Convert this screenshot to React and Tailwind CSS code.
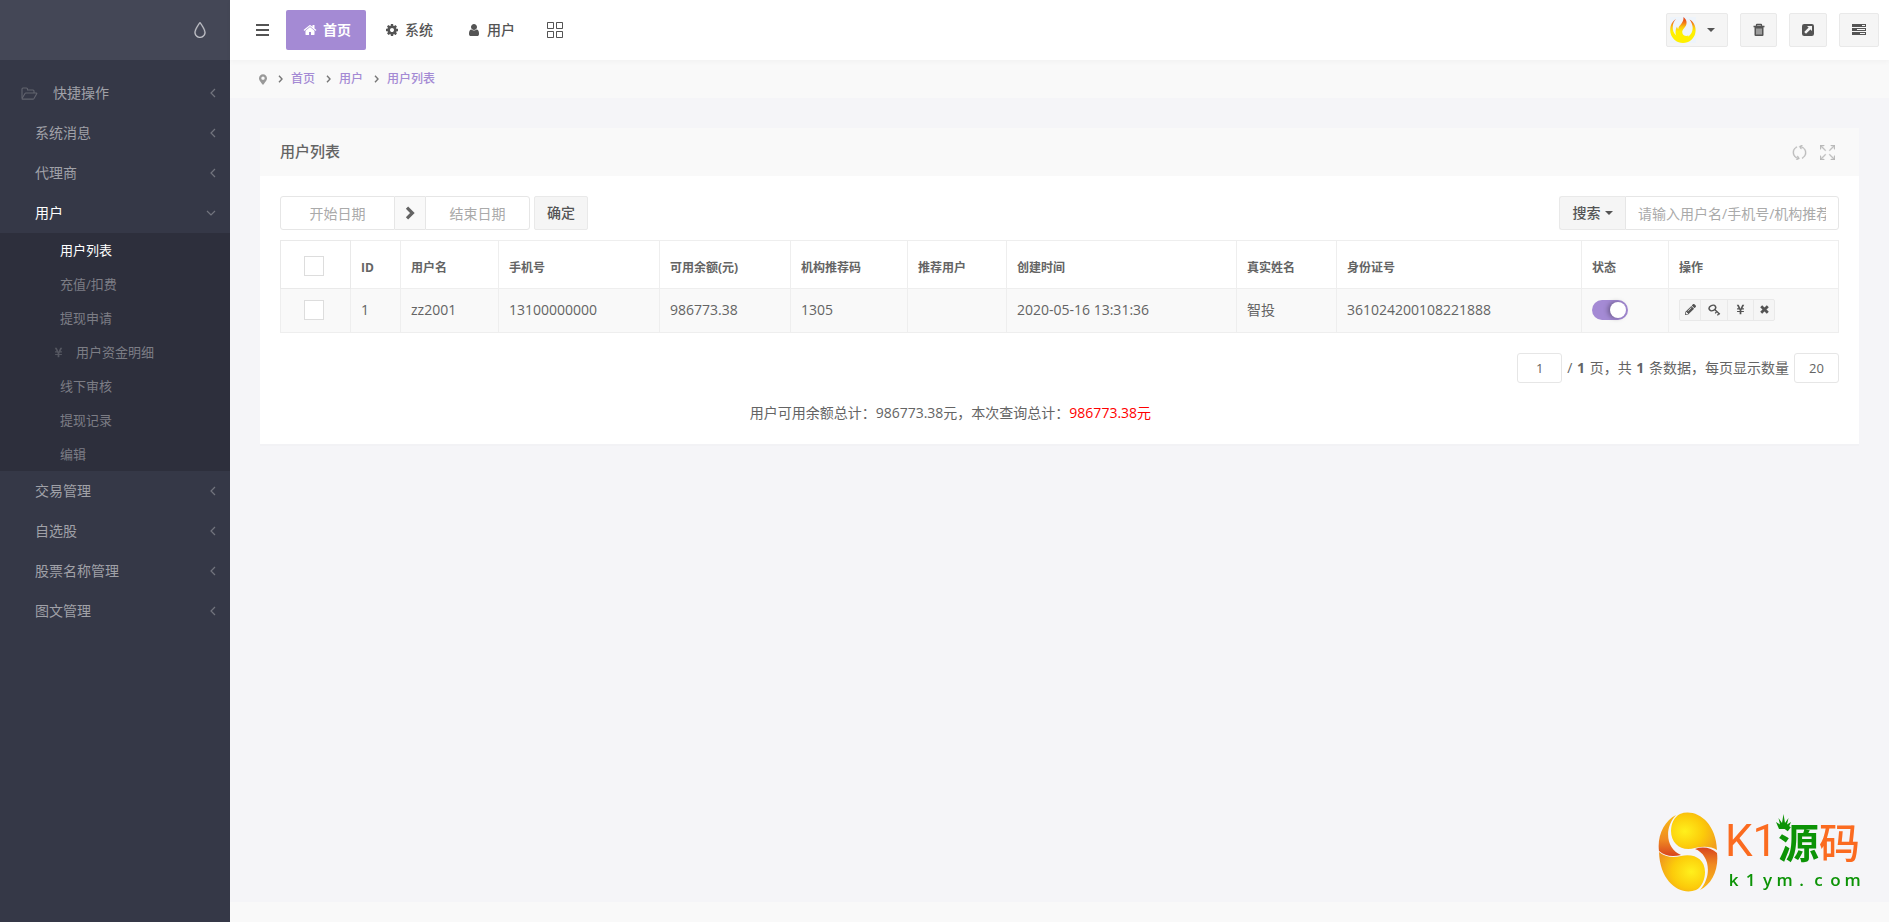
import { FaMapMarkerAlt, FaPencilAlt, FaYenSign } from "react-icons/fa";
import { SlDrop, SlGrid, SlRefresh, SlSizeFullscreen } from "react-icons/sl";

const menuTop = [
  { label: "快捷操作", icon: true },
  { label: "系统消息" },
  { label: "代理商" },
  { label: "用户", open: true },
];

const subMenu = [
  { label: "用户列表", active: true },
  { label: "充值/扣费" },
  { label: "提现申请" },
  { label: "用户资金明细", icon: true },
  { label: "线下审核" },
  { label: "提现记录" },
  { label: "编辑" },
];

const menuBottom = ["交易管理", "自选股", "股票名称管理", "图文管理"];

const columns = [
  { title: "ID", width: "w-[50px]" },
  { title: "用户名", width: "w-[98px]" },
  { title: "手机号", width: "w-[161px]" },
  { title: "可用余额(元)", width: "w-[131px]" },
  { title: "机构推荐码", width: "w-[117px]" },
  { title: "推荐用户", width: "w-[99px]" },
  { title: "创建时间", width: "w-[230px]" },
  { title: "真实姓名", width: "w-[100px]" },
  { title: "身份证号", width: "w-[245px]" },
  { title: "状态", width: "w-[87px]" },
  { title: "操作", width: "" },
];

const rows = [
  ["1", "zz2001", "13100000000", "986773.38", "1305", "", "2020-05-16 13:31:36", "智投", "361024200108221888"],
];

function Glyph({ d, className }) {
  return (
    <svg viewBox="0 0 1792 1792" fill="currentColor" className={className} aria-hidden="true">
      <path d={d} />
    </svg>
  );
}

const homePath =
  "M1472 992v480q0 26-19 45t-45 19h-384v-384h-256v384h-384q-26 0-45-19t-19-45v-480q0-1 .5-3t.5-3l575-474 575 474q1 2 1 6zm223-69l-62 74q-8 9-21 11h-3q-13 0-21-7l-692-577-692 577q-12 8-24 7-13-2-21-11l-62-74q-8-10-7-23.5t11-21.5l719-599q32-26 76-26t76 26l244 204v-195q0-14 9-23t23-9h192q14 0 23 9t9 23v408l219 182q10 8 11 21.5t-7 23.5z";
const cogPath =
  "M1152 896q0-106-75-181t-181-75-181 75-75 181 75 181 181 75 181-75 75-181zm512-109v222q0 12-8 23t-20 13l-185 28q-19 54-39 91 35 50 107 138 10 12 10 25t-9 23q-27 37-99 108t-94 71q-12 0-26-9l-138-108q-44 23-91 38-16 136-29 186-7 28-36 28h-222q-14 0-24.5-8.5t-11.5-21.5l-28-184q-49-16-90-37l-141 107q-10 9-25 9-14 0-25-11-126-114-165-168-7-10-7-23 0-12 8-23 15-21 51-66.5t54-70.5q-27-50-41-99l-183-27q-13-2-21-12.5t-8-23.5v-222q0-12 8-23t19-13l186-28q14-46 39-92-40-57-107-138-10-12-10-24 0-10 9-23 26-36 98.5-107.5t94.5-71.5q13 0 26 10l138 107q44-23 91-38 16-136 29-186 7-28 36-28h222q14 0 24.5 8.5t11.5 21.5l28 184q49 16 90 37l142-107q9-9 24-9 13 0 25 10 129 119 165 170 7 8 7 22 0 12-8 23-15 21-51 66.5t-54 70.5q26 50 41 98l183 28q13 2 21 12.5t8 23.5z";
const userPath =
  "M1536 1399q0 109-62.5 187t-150.5 78h-854q-88 0-150.5-78t-62.5-187q0-85 8.5-160.5t31.5-152 58.5-131 94-89 134.5-34.5q131 128 313 128t313-128q76 0 134.5 34.5t94 89 58.5 131 31.5 152 8.5 160.5zm-256-887q0 159-112.5 271.5t-271.5 112.5-271.5-112.5-112.5-271.5 112.5-271.5 271.5-112.5 271.5 112.5 112.5 271.5z";

const strokeProps = { fill: "none", stroke: "currentColor", "aria-hidden": true };

function AngleLeft() {
  return (
    <svg viewBox="0 0 6 10" className="h-[10px] w-[6px] text-[#72747e]" strokeWidth="1.2" {...strokeProps}>
      <path d="M5 1L1 5l4 4" />
    </svg>
  );
}

function AngleDown() {
  return (
    <svg viewBox="0 0 10 6" className="h-[6px] w-[10px] text-[#72747e]" strokeWidth="1.2" {...strokeProps}>
      <path d="M1 1l4 4 4-4" />
    </svg>
  );
}

function AngleRight() {
  return (
    <svg viewBox="0 0 5 8" className="h-2 w-[5px] text-[#777]" strokeWidth="1.4" {...strokeProps}>
      <path d="M1 .8L4 4 1 7.2" />
    </svg>
  );
}

function ChevronRight() {
  return (
    <svg viewBox="0 0 10 14" className="h-[14px] w-[10px]" strokeWidth="3.2" {...strokeProps}>
      <path d="M2 1.6L7.4 7 2 12.4" />
    </svg>
  );
}

function Caret() {
  return (
    <svg viewBox="0 0 8 4" className="h-1 w-2" fill="currentColor" aria-hidden="true">
      <path d="M0 0h8L4 4z" />
    </svg>
  );
}

function FolderOpenIcon() {
  return (
    <svg viewBox="0 0 17 13" className="h-[13px] w-[17px] text-[#62646f]" strokeWidth="1.1" strokeLinejoin="round" {...strokeProps}>
      <path d="M1 11V2q0-1 1-1h3.5q1 0 1 1v1H12q1 0 1 1v2" />
      <path d="M4.800 6h10.500q.9 0 .4.800L13 11.500q-.4.600-1.200.600H1.500q-.8 0-.3-.8L4 6.500q.3-.5.800-.5z" />
    </svg>
  );
}

function KeyIcon() {
  return (
    <svg viewBox="0 0 13 12" className="h-3 w-[13px]" {...strokeProps}>
      <ellipse cx="4.400" cy="4" rx="3.400" ry="2.600" strokeWidth="1.500" transform="rotate(-25 4.400 4)" />
      <path d="M6.400 5.200l5.400 5" strokeWidth="1.400" />
      <path d="M7.200 9.300l1.700-2M9.400 11.400l1.700-2" strokeWidth="1.300" />
    </svg>
  );
}

function TimesIcon() {
  return (
    <svg viewBox="0 0 9 9" className="size-[9px]" strokeWidth="2.8" {...strokeProps}>
      <path d="M1.200 1.200l6.600 6.600M7.800 1.200L1.200 7.800" />
    </svg>
  );
}

function PencilIcon() {
  return <FaPencilAlt className="size-[11px]" />;
}

function YenIcon() {
  return <FaYenSign className="size-[11px]" />;
}

function TrashIcon() {
  return (
    <svg viewBox="0 0 14 14" className="size-[14px]" fill="none" stroke="currentColor" aria-hidden="true">
      <path d="M1.500 3.500h11M4.500 3.500V2q0-.5.5-.5h4q.5 0 .5.500v1.500" strokeWidth="1.3" />
      <path d="M2.500 4h9v8q0 1-1 1h-7q-1 0-1-1z" fill="currentColor" stroke="none" />
      <path d="M5 5.500v6M7 5.500v6M9 5.500v6" stroke="#f5f5f5" strokeWidth=".9" />
    </svg>
  );
}

function ExternalIcon() {
  return (
    <svg viewBox="0 0 12 12" className="size-3" aria-hidden="true">
      <rect width="12" height="12" rx="2.2" fill="currentColor" />
      <path d="M5 2h5v5L8.400 5.400 4 9.800 2.200 8 6.600 3.600z" fill="#f5f5f5" />
    </svg>
  );
}

function TasksIcon() {
  return (
    <svg viewBox="0 0 14 12" className="h-3 w-[14px]" aria-hidden="true">
      <path d="M0 0h14v3H0zM0 4h14v3H0zM0 8h14v3H0z" fill="currentColor" />
      <path d="M10 1h3v1h-3zM5 5h8v1H5zM8 9h5v1H8z" fill="#f5f5f5" />
    </svg>
  );
}

function FlameAvatar() {
  return (
    <svg viewBox="0 0 26 26" className="size-[26px]" aria-hidden="true">
      <defs>
        <linearGradient id="flame" gradientUnits="userSpaceOnUse" x1="0" y1="0" x2="0" y2="26">
          <stop offset="0" stopColor="#e23a16" />
          <stop offset=".2" stopColor="#f0701a" />
          <stop offset=".38" stopColor="#fbc412" />
          <stop offset=".55" stopColor="#fff000" />
        </linearGradient>
      </defs>
      <rect width="26" height="26" fill="#eef4fb" />
      {/* outer ring, open at the top */}
      <path
        fill="url(#flame)"
        d="M6 2C1 5-.5 11 .5 16c1.500 6 6.500 10 12.500 10s11-4 12.300-10C26.500 10 24 5 19.500 2.500 23 7 23.500 12 21.500 16c-2 3.500-5 5-8.500 5-5 0-9-3.500-10-8-.7-4 0-8 3-11z"
      />
      {/* inner flame */}
      <path
        fill="url(#flame)"
        d="M13.500 0c3.500 3 4 6.500 1.500 10-2 2.500-3.500 4-2.500 6.500.7 2 3 3 6 2l-2 4-9-1.500C5 18 5 13 7 9.500c.3 1.500.5 2 1.300 2.500C8.500 8 14 6.500 13.500 0z"
      />
    </svg>
  );
}

function Watermark() {
  return (
    <div className="fixed right-7 bottom-[30px] flex items-start gap-[7px]">
      <svg viewBox="0 0 60 80" className="h-20 w-[60px]" aria-hidden="true">
        <defs>
          <radialGradient id="eggTop" cx=".3" cy=".5" r=".75">
            <stop offset="0" stopColor="#fff01c" />
            <stop offset=".55" stopColor="#fccb0a" />
            <stop offset="1" stopColor="#f2a01c" />
          </radialGradient>
          <radialGradient id="eggBottom" cx=".7" cy=".5" r=".75">
            <stop offset="0" stopColor="#fff01c" />
            <stop offset=".55" stopColor="#fccb0a" />
            <stop offset="1" stopColor="#f0981e" />
          </radialGradient>
          <linearGradient id="eggLeft" x1="0" y1="0" x2="0" y2="1">
            <stop offset="0" stopColor="#f9bd14" />
            <stop offset=".6" stopColor="#f08a22" />
            <stop offset="1" stopColor="#d8441e" />
          </linearGradient>
          <linearGradient id="eggRight" x1="0" y1="0" x2="0" y2="1">
            <stop offset="0" stopColor="#d8441e" />
            <stop offset=".4" stopColor="#f08a22" />
            <stop offset="1" stopColor="#f9bd14" />
          </linearGradient>
        </defs>
        <path d="M18 3C6 9-1 24 1 39c6 5 13 6 22 4C9 38 5 17 18 3z" fill="url(#eggLeft)" />
        <path d="M42 78c12-6 19-21 17-37-5-5-14-7-22-4 14 5 18 26 5 41z" fill="url(#eggRight)" />
        <path d="M22 2C37-4 58 9 59 38c-6-4-14-4-22-2-13 4-24-4-24-17 0-7 3-14 9-17z" fill="url(#eggTop)" />
        <path d="M38 78C23 84 2 71 1 40c6 5 14 6 22 4 13-3 24 3 24 16 0 7-3 15-9 18z" fill="url(#eggBottom)" />
      </svg>
      <div className="w-[136px] text-[#0c9306]">
        <div className="relative flex h-[57px] items-center justify-between pr-px whitespace-nowrap text-[#fb6b20]">
          <span className="font-[Roboto,sans-serif] text-[44px] leading-[44px]">K1</span>
          <span className="font-['Noto_Sans_CJK_SC',sans-serif] text-[41px] leading-[41px]">
            <span className="font-bold text-[#0c9306]">源</span>
            <span className="font-medium">码</span>
          </span>
          <svg viewBox="0 0 15 16" className="absolute top-[2px] left-[51px] h-4 w-[15px]" fill="#0c9306" aria-hidden="true">
            <path d="M3 15L0 8l4 2.500L2.500 4l3.500 5L7.500 0 9 9l3.500-5L11 10.500 15 8l-3 7z" />
          </svg>
        </div>
        <div className="grid grid-cols-8 text-center font-['Open_Sans',sans-serif] text-[17px] leading-[22px] font-semibold">
          {"k1ym.com".split("").map((c, i) => (
            <span key={i}>{c}</span>
          ))}
        </div>
      </div>
    </div>
  );
}

function Sidebar() {
  return (
    <aside className="w-[230px] shrink-0 bg-[#353847] text-sm text-[#a0a1a8]">
      <div className="flex h-[60px] items-center justify-end bg-[#444756] pr-[22px]">
        <button type="button" aria-label="主题" className="text-[#c8c9ce]">
          <SlDrop className="size-4" strokeWidth={20} />
        </button>
      </div>

      <nav className="pt-[13px]">
        {menuTop.map(({ label, icon, open }) => (
          <a
            key={label}
            href="#"
            className={`flex h-10 items-center gap-[15px] pr-[14px] ${icon ? "pl-[21px]" : "pl-[35px]"} ${open ? "text-white" : ""}`}
          >
            {icon && <FolderOpenIcon />}
            <span className="flex-1">{label}</span>
            {open ? <AngleDown /> : <AngleLeft />}
          </a>
        ))}

        <div className="bg-[#2d2f3c] text-[13px] text-[#7c7d85]">
          {subMenu.map(({ label, icon, active }) => (
            <a
              key={label}
              href="#"
              className={`flex h-[34px] items-center ${icon ? "pl-[53px]" : "pl-[60px]"} ${active ? "text-white" : ""}`}
            >
              {icon && <FaYenSign className="mr-3 size-[11px] text-[#555761]" />}
              {label}
            </a>
          ))}
        </div>

        {menuBottom.map((label) => (
          <a key={label} href="#" className="flex h-10 items-center pr-[14px] pl-[35px]">
            <span className="flex-1">{label}</span>
            <AngleLeft />
          </a>
        ))}
      </nav>
    </aside>
  );
}

const headerButton = "flex h-[34px] items-center rounded-xs border border-[#e9e9e9] bg-[#f5f5f5] text-[#545454]";

function Header() {
  return (
    <header className="relative z-10 flex h-[60px] items-center justify-between bg-white pr-[10px] pl-[26px] text-sm font-medium text-[#545454] shadow-[0_2px_5px_rgba(0,0,0,0.03)]">
      <nav className="flex items-center">
        <button type="button" aria-label="菜单" className="mr-[17px]">
          <svg viewBox="0 0 13 12" className="h-3 w-[13px]" fill="currentColor" aria-hidden="true">
            <path d="M0 0h13v2H0zM0 5h13v2H0zM0 10h13v2H0z" />
          </svg>
        </button>
        <a href="#" className="flex h-10 w-20 items-center gap-[6px] rounded-xs bg-[#a48ad4] pl-[17px] font-bold text-white">
          <Glyph d={homePath} className="size-[14px]" />
          首页
        </a>
        <a href="#" className="ml-[19px] flex items-center gap-[6px]">
          <Glyph d={cogPath} className="size-[14px]" />
          系统
        </a>
        <a href="#" className="ml-[34px] flex items-center gap-[6px]">
          <Glyph d={userPath} className="size-[14px]" />
          用户
        </a>
        <a href="#" aria-label="应用" className="ml-8">
          <SlGrid className="size-4" />
        </a>
      </nav>

      <div className="flex items-center gap-3">
        <button type="button" aria-label="账户" className={`${headerButton} w-[62px] gap-[11px] pl-[3px]`}>
          <FlameAvatar />
          <Caret />
        </button>
        <button type="button" aria-label="清空缓存" className={`${headerButton} w-[37px] justify-center`}>
          <TrashIcon />
        </button>
        <button type="button" aria-label="打开前台" className={`${headerButton} w-[38px] justify-center`}>
          <ExternalIcon />
        </button>
        <button type="button" aria-label="侧栏" className={`${headerButton} w-10 justify-center`}>
          <TasksIcon />
        </button>
      </div>
    </header>
  );
}

function Breadcrumb() {
  return (
    <div className="flex h-[38px] items-center bg-[#f9f9f9] pl-[29px] text-xs font-medium text-[#a48ad4]">
      <FaMapMarkerAlt className="h-[11px] w-2 text-[#999]" />
      {["首页", "用户", "用户列表"].map((label) => (
        <span key={label} className="flex items-center gap-2 pl-[11px]">
          <AngleRight />
          <a href="#">{label}</a>
        </span>
      ))}
    </div>
  );
}

const field = "border border-[#e6e6e6] bg-white text-[#646464] placeholder-[#aaa] outline-none";

function Toolbar() {
  return (
    <div className="flex items-center justify-between">
      <form className="flex text-sm">
        <input aria-label="开始日期" placeholder="开始日期" className={`${field} h-[34px] w-[115px] rounded-l-[3px] text-center`} />
        <span className="flex w-[30px] items-center justify-center border-y border-[#e6e6e6] bg-[#f9f9f9] text-[#646464]">
          <ChevronRight />
        </span>
        <input aria-label="结束日期" placeholder="结束日期" className={`${field} h-[34px] w-[105px] rounded-r-[3px] text-center`} />
        <button type="button" className="ml-1 h-[34px] w-[54px] rounded-xs border border-[#e9e9e9] bg-[#f5f5f5] font-medium text-[#545454]">
          确定
        </button>
      </form>

      <form className="flex text-sm">
        <button
          type="button"
          className="flex h-[34px] w-[66px] items-center justify-center gap-1 rounded-l-[3px] border border-r-0 border-[#e9e9e9] bg-[#f5f5f5] font-medium text-[#545454]"
        >
          搜索
          <Caret />
        </button>
        <input
          aria-label="搜索"
          placeholder="请输入用户名/手机号/机构推荐码"
          className={`${field} h-[34px] w-[214px] rounded-r-[3px] px-3`}
        />
      </form>
    </div>
  );
}

function Checkbox({ label }) {
  return (
    <input
      type="checkbox"
      aria-label={label}
      className="mx-auto block size-5 appearance-none border border-[#ddd] bg-white checked:bg-[#a48ad4]"
    />
  );
}

const actions = [
  { label: "编辑", icon: PencilIcon, width: "w-[21px]" },
  { label: "密码", icon: KeyIcon, width: "w-[27px]" },
  { label: "资金", icon: YenIcon, width: "w-[26px]" },
  { label: "删除", icon: TimesIcon, width: "w-5" },
];

function UserTable() {
  const cell = "border border-[#eee] px-[10px]";

  return (
    <table className="mt-[10px] w-full table-fixed border-collapse text-left text-sm">
      <thead>
        <tr className="h-12 text-xs">
          <th className="w-[70px] border border-[#e9e9e9] pt-[3px] pr-[3px]">
            <Checkbox label="全选" />
          </th>
          {columns.map(({ title, width }) => (
            <th key={title} className={`${cell} ${width} pt-[6px] font-bold`}>
              {title}
            </th>
          ))}
        </tr>
      </thead>
      <tbody>
        {rows.map((row) => (
          <tr key={row[0]} className="h-11 bg-[#f9f9f9]">
            <td className="border border-[#eee] pr-[3px] pb-[2px]">
              <Checkbox label={`选择 ${row[1]}`} />
            </td>
            {row.map((value, i) => (
              <td key={columns[i].title} className={`${cell} pb-[2px]`}>
                {value}
              </td>
            ))}
            <td className={`${cell} pb-[2px]`}>
              <label className="relative block h-5 w-9 rounded-full bg-[#a48ad4]">
                <input type="checkbox" defaultChecked aria-label="状态" className="peer absolute inset-0 opacity-0" />
                <span className="absolute top-[2px] right-[2px] size-4 rounded-full bg-white shadow-[-2px_0_5px_rgba(0,0,0,0.35)]" />
              </label>
            </td>
            <td className={`${cell} pb-[2px]`}>
              <div className="flex h-[22px] w-fit divide-x divide-[#e9e9e9] rounded-xs border border-[#e9e9e9] bg-[#f5f5f5] text-[#545454]">
                {actions.map(({ label, icon: Icon, width }) => (
                  <button key={label} type="button" aria-label={label} className={`flex items-center justify-center ${width}`}>
                    <Icon />
                  </button>
                ))}
              </div>
            </td>
          </tr>
        ))}
      </tbody>
    </table>
  );
}

function Pagination() {
  const box = `${field} h-[30px] w-[45px] rounded-[3px] text-center text-[13px]`;

  return (
    <div className="mt-5 flex items-center justify-end gap-[5px]">
      <input aria-label="页码" defaultValue="1" className={box} />
      <span>
        / <strong className="mx-px">1</strong> 页，共 <strong className="mx-px">1</strong> 条数据，每页显示数量
      </span>
      <input aria-label="每页显示数量" defaultValue="20" className={box} />
    </div>
  );
}

export default function App() {
  return (
    <div className="flex min-h-screen bg-[#f5f5f8] font-['Open_Sans','Noto_Sans_CJK_SC',sans-serif] text-sm text-[#646464]">
      <Sidebar />

      <div className="flex min-w-0 flex-1 flex-col">
        <Header />
        <Breadcrumb />

        <main className="flex-1 p-[30px]">
          <section className="bg-white shadow-[0_2px_0_rgba(0,0,0,0.01)]">
            <div className="flex h-12 items-center justify-between bg-[#f9f9f9] px-5">
              <h3 className="text-[15px] font-medium">用户列表</h3>
              <div className="flex items-center gap-[13px] pr-1 text-[#bbb]">
                <button type="button" aria-label="刷新">
                  <SlRefresh className="size-[15px]" strokeWidth={30} />
                </button>
                <button type="button" aria-label="全屏">
                  <SlSizeFullscreen className="size-[15px]" strokeWidth={30} />
                </button>
              </div>
            </div>

            <div className="px-5 pt-5 pb-[21px]">
              <Toolbar />
              <UserTable />
              <Pagination />
              <p className="mt-5 w-[86%] text-center leading-5">
                用户可用余额总计：986773.38元，本次查询总计：<span className="text-[#f00]">986773.38元</span>
              </p>
            </div>
          </section>
        </main>

        <footer className="h-5 bg-[#f9f9f9]" />
      </div>

      <Watermark />
    </div>
  );
}
